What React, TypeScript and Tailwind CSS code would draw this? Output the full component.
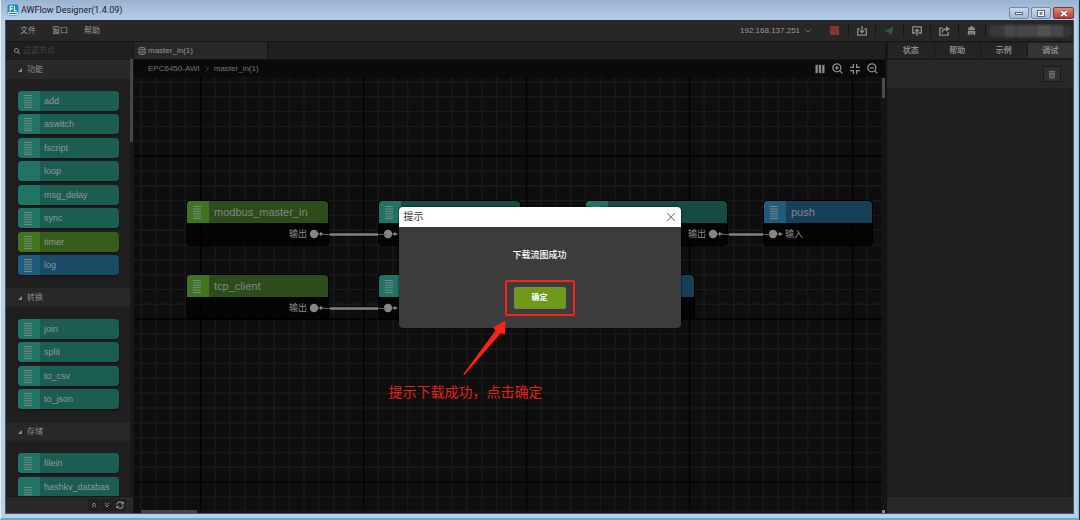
import type { ReactNode } from "react";
import { ChevronDown, ChevronRight, ChevronsDown, ChevronsUp, X } from "lucide-react";
import { FaSearch, FaSyncAlt } from "react-icons/fa";

type Tone = "teal" | "green" | "blue";

interface PaletteItem {
  name: string;
  tone: Tone;
  icon?: boolean;
}

interface FlowNode {
  id: string;
  label: string;
  tone: Tone;
  input?: string;
  output?: string;
  // place on the canvas, in canvas pixels
  place: string;
}

const tones: Record<Tone, { head: string; body: string; nodeBody: string }> = {
  teal: { head: "bg-[#1f7465]", body: "bg-[#1c5d52]", nodeBody: "bg-[#174b42]" },
  green: { head: "bg-[#41741f]", body: "bg-[#355c1b]", nodeBody: "bg-[#2c4d19]" },
  blue: { head: "bg-[#1f5b7e]", body: "bg-[#1c4b67]", nodeBody: "bg-[#173f58]" },
};

const functionItems: PaletteItem[] = [
  { name: "add", tone: "teal", icon: true },
  { name: "aswitch", tone: "teal", icon: true },
  { name: "fscript", tone: "teal", icon: true },
  { name: "loop", tone: "teal" },
  { name: "msg_delay", tone: "teal" },
  { name: "sync", tone: "teal", icon: true },
  { name: "timer", tone: "green", icon: true },
  { name: "log", tone: "blue", icon: true },
];

const convertItems: PaletteItem[] = [
  { name: "join", tone: "teal", icon: true },
  { name: "split", tone: "teal", icon: true },
  { name: "to_csv", tone: "teal", icon: true },
  { name: "to_json", tone: "teal", icon: true },
];

const nodes: FlowNode[] = [
  { id: "n1", label: "modbus_master_in", tone: "green", output: "输出", place: "left-[52px] top-[123px] w-[143px]" },
  { id: "n2", label: "", tone: "teal", input: "", place: "left-[244px] top-[123px] w-[143px]" },
  { id: "n3", label: "", tone: "teal", output: "输出", place: "left-[451px] top-[123px] w-[143px]" },
  { id: "n4", label: "push", tone: "blue", input: "输入", place: "left-[629px] top-[123px] w-[110px]" },
  { id: "n5", label: "tcp_client", tone: "green", output: "输出", place: "left-[52px] top-[197px] w-[143px]" },
  { id: "n6", label: "", tone: "teal", input: "", place: "left-[244px] top-[197px] w-[143px]" },
  { id: "n7", label: "", tone: "blue", place: "left-[418px] top-[197px] w-[143px]" },
];

const wires = [
  { from: 195, to: 244, y: 157 },
  { from: 195, to: 244, y: 231 },
  { from: 594, to: 629, y: 157 },
];

const MAJOR = 163;
const range = (n: number) => Array.from({ length: n }, (_, i) => i);

const ListGlyph = () => (
  <svg width="8" height="13" viewBox="0 0 8 13" className="text-[#768984]" aria-hidden="true">
    {[0, 2.4, 4.8, 7.2, 9.6, 12].map((y) => (
      <rect key={y} x="0" y={y} width="8" height="1" fill="currentColor" />
    ))}
  </svg>
);

const PaletteNode = ({ name, tone, icon }: PaletteItem) => (
  <div
    draggable
    className={`flex h-5 overflow-hidden rounded-sm shadow-[0_1px_2px_#111] ${tones[tone].body}`}
  >
    <span className={`flex w-[22px] items-center pl-1.5 pt-px ${tones[tone].head}`}>{icon && <ListGlyph />}</span>
    <span className="pl-1 text-[9px] leading-5 text-[#8c9a96]">{name}</span>
  </div>
);

const SectionHeader = ({ title }: { title: string }) => (
  <button className="flex h-5 w-full items-center border-t border-[#1a1a1a] bg-[#282828] pl-3 text-[8px] text-[#8c8c8c]">
    <svg width="4" height="4" viewBox="0 0 4 4" className="mr-[5px]" aria-hidden="true">
      <path d="M4 0V4H0Z" fill="#8c8c8c" />
    </svg>
    {title}
  </button>
);

const Port = () => (
  <svg width="16" height="10" viewBox="0 0 16 10" aria-hidden="true">
    <circle cx="5" cy="5" r="4.2" fill="#868686" />
    <path d="M9 4.5H11V3L15 5L11 7V5.5H9Z" fill="#868686" />
  </svg>
);

const CanvasNode = ({ node }: { node: FlowNode }) => (
  <div className={`absolute rounded-sm border border-black bg-black/70 ${node.place}`}>
    <div className={`flex h-[22px] overflow-hidden rounded-t-sm ${tones[node.tone].nodeBody}`}>
      <span className={`flex w-[22px] items-center pl-1.5 ${tones[node.tone].head}`}>
        <ListGlyph />
      </span>
      <span className="pl-[5px] text-[11px] leading-[22px] text-[#848484]">{node.label}</span>
    </div>
    <div className="flex h-[22px] items-center text-[9px] text-[#8c8c8c]">
      {node.input !== undefined && (
        <span className="flex items-center gap-px pl-1">
          <Port />
          {node.input}
        </span>
      )}
      {node.output !== undefined && (
        <span className="ml-auto flex items-center gap-0.5 pr-[3px]">
          {node.output}
          <Port />
        </span>
      )}
    </div>
  </div>
);

const Grid = () => (
  <svg className="absolute inset-0 h-full w-full" aria-hidden="true">
    {range(160).map((i) => (
      <g key={i} stroke="#1a1a1a" strokeWidth="1.4">
        <line x1={7 + (i * MAJOR) / 11} x2={7 + (i * MAJOR) / 11} y1="0" y2="100%" />
        <line y1={5 + (i * MAJOR) / 11} y2={5 + (i * MAJOR) / 11} x1="0" x2="100%" />
      </g>
    ))}
    {range(15).map((i) => (
      <g key={i} stroke="#000" strokeWidth="1.4">
        <line x1={66.5 + i * MAJOR} x2={66.5 + i * MAJOR} y1="0" y2="100%" />
        <line y1={79 + i * MAJOR} y2={79 + i * MAJOR} x1="0" x2="100%" />
      </g>
    ))}
  </svg>
);

const Wires = () => (
  <svg className="pointer-events-none absolute inset-0 h-full w-full" aria-hidden="true">
    {wires.map((w) => (
      <g key={`${w.from}-${w.y}`}>
        <line x1={w.from - 8} x2={w.to + 8} y1={w.y + 0.5} y2={w.y + 0.5} stroke="#5c5a5a" />
        <line x1={w.from + 1} x2={w.to} y1={w.y + 0.5} y2={w.y + 0.5} stroke="#858181" strokeWidth="2.4" />
      </g>
    ))}
  </svg>
);

const ToolButton = ({ label, children }: { label: string; children: ReactNode }) => (
  <button aria-label={label} className="flex h-[14px] flex-1 items-center justify-center border-r border-[#161616]">
    {children}
  </button>
);

const stroke = { fill: "none", stroke: "#8e8e8e", strokeWidth: 1.3 };

const TitleBar = () => (
  <header className="flex h-5 items-center bg-linear-to-b from-[#9ab3d0] to-[#b7cfea] pl-1.5 pr-1">
    <svg width="12" height="12" viewBox="0 0 12 12" aria-hidden="true">
      <rect x="0.5" y="0.5" width="11" height="11" rx="2" fill="#168fc4" />
      <rect x="1" y="8" width="10" height="3" rx="1" fill="#dfeaf2" />
      <path d="M3.2 7.2V2.2H6M3.2 4.6H5.6M7.4 2V6.7H9.8" fill="none" stroke="#fff" strokeWidth="1.1" />
      <path d="M2 9.5H10" stroke="#2b4a5c" strokeWidth="0.8" />
    </svg>
    <h1 className="ml-0.5 font-['Roboto','Noto_Sans_CJK_SC',sans-serif] text-[9px] text-[#1c222b]">
      AWFlow Designer(1.4.09)
    </h1>
    <div className="ml-auto flex gap-0.5 pt-1.5">
      <button aria-label="最小化" className="flex h-3 w-5 items-center justify-center rounded-xs border border-[#7389a6] bg-linear-to-b from-[#c8d9ec] to-[#a2bbd8]">
        <span className="h-[3px] w-2 border border-[#5e6874] bg-white" />
      </button>
      <button aria-label="最大化" className="flex h-3 w-5 items-center justify-center rounded-xs border border-[#7389a6] bg-linear-to-b from-[#c8d9ec] to-[#a2bbd8]">
        <svg width="8" height="7" viewBox="0 0 8 7" aria-hidden="true">
          <rect x="0.5" y="0.5" width="7" height="6" fill="#fff" stroke="#5e6874" />
          <rect x="3" y="2.5" width="2" height="2" fill="#8fa6c0" stroke="#5e6874" strokeWidth="0.7" />
        </svg>
      </button>
      <button aria-label="关闭" className="flex h-3 w-[21px] items-center justify-center rounded-xs border border-[#7a3c3a] bg-linear-to-b from-[#d98a7c] to-[#bb3a26]">
        <svg width="8" height="7" viewBox="0 0 8 7" aria-hidden="true">
          <path d="M1 1L7 6M7 1L1 6" stroke="#5a3030" strokeWidth="2.8" />
          <path d="M1 1L7 6M7 1L1 6" stroke="#fff" strokeWidth="1.7" />
        </svg>
      </button>
    </div>
  </header>
);

const MenuBar = () => (
  <nav className="flex h-[21px] shrink-0 items-center bg-[#272727] text-[8px] text-[#9a9a9a]">
    <div className="flex gap-4 pl-3.5">
      <button>文件</button>
      <button>窗口</button>
      <button>帮助</button>
    </div>
    <div className="ml-auto flex items-center">
      <label className="relative flex items-center">
        <select aria-label="设备地址" className="w-[81px] appearance-none bg-transparent text-[8px] outline-none">
          <option>192.168.137.251</option>
        </select>
        <ChevronDown className="pointer-events-none absolute left-16 size-2" />
      </label>
      <div className="flex w-[165px]">
        <ToolButton label="停止">
          <span className="size-[9px] bg-[#853233]" />
        </ToolButton>
        <ToolButton label="下载">
          <svg width="10" height="10" viewBox="0 0 10 10" aria-hidden="true">
            <path d="M2.5 3H0.7V9.2H9.3V3H7.5M5 0V6.5M3 4.6L5 6.6L7 4.6" {...stroke} />
          </svg>
        </ToolButton>
        <ToolButton label="运行">
          <svg width="10" height="10" viewBox="0 0 10 10" aria-hidden="true">
            <path d="M0.5 5L9.5 0.5L7.2 9.5L4.6 6.2Z" fill="#27633a" />
          </svg>
        </ToolButton>
        <ToolButton label="上传">
          <svg width="10" height="10" viewBox="0 0 10 10" aria-hidden="true">
            <path d="M3.5 7H0.7V0.8H9.3V7H6.5M5 10V3.4M3 5.3L5 3.3L7 5.3" {...stroke} />
          </svg>
        </ToolButton>
        <ToolButton label="导出">
          <svg width="11" height="10" viewBox="0 0 11 10" aria-hidden="true">
            <path d="M4 2.2H0.8V9.2H9.2V6M3 6.6C3.4 4.4 5 3 8 3" {...stroke} />
            <path d="M7 0L11 3L7 5.8Z" fill="#8e8e8e" />
          </svg>
        </ToolButton>
        <ToolButton label="清理">
          <svg width="9" height="9" viewBox="0 0 9 9" aria-hidden="true">
            <path d="M3 0.3H6V1.6H7.8V4H1.2V1.6H3ZM0.8 4.8H8.2V8.8H0.8Z" fill="#8e8e8e" />
            <path d="M3.3 6.6V9M5.7 6.6V9" stroke="#272727" strokeWidth="0.8" />
          </svg>
        </ToolButton>
      </div>
      {/* account name, smudged out */}
      <div className="flex h-[19px] w-[87px] items-center overflow-hidden pl-0.5">
        <span className="h-3 w-4 rounded-l-full bg-[#353a3c] blur-[1px]" />
        <span className="h-3 w-3 bg-[#45494b] blur-[1px]" />
        <span className="h-3 w-5 bg-[#4a4648] blur-[1px]" />
        <span className="h-3 w-4 bg-[#505153] blur-[1px]" />
        <span className="h-3 w-3 bg-[#45494c] blur-[1px]" />
        <span className="h-3 w-2 rounded-r-full bg-[#33383b] blur-[1px]" />
      </div>
    </div>
  </nav>
);

const Palette = () => (
  <aside className="flex w-[127px] shrink-0 flex-col bg-[#1f1f1f]">
    <label className="flex h-[17px] shrink-0 items-center gap-[3px] pl-2 text-[#8a8a8a]">
      <FaSearch className="size-[6px]" />
      <input
        aria-label="过滤节点"
        placeholder="过滤节点"
        className="w-24 bg-transparent text-[8px] outline-none placeholder:text-[#444]"
      />
    </label>
    <div className="flex min-h-0 flex-1">
      <div className="min-w-0 flex-1 overflow-hidden">
        <SectionHeader title="功能" />
        <div className="flex h-[208px] flex-col justify-between py-3 pl-3 pr-[11px]">
          {functionItems.map((item) => (
            <PaletteNode key={item.name} {...item} />
          ))}
        </div>
        <SectionHeader title="转换" />
        <div className="flex h-[114px] flex-col justify-between py-3 pl-3 pr-[11px]">
          {convertItems.map((item) => (
            <PaletteNode key={item.name} {...item} />
          ))}
        </div>
        <SectionHeader title="存储" />
        <div className="flex flex-col gap-1 py-3 pl-3 pr-[11px]">
          <PaletteNode name="filein" tone="teal" icon />
          <div className="flex h-8 overflow-hidden rounded-sm bg-[#1c5d52]">
            <span className="flex w-[22px] items-center bg-[#1f7465] pl-1.5 pt-px">
              <ListGlyph />
            </span>
            <span className="pl-1 text-[9px] leading-5 text-[#8c9a96]">hashkv_databas</span>
          </div>
        </div>
      </div>
      <div className="w-[3px] bg-[#191919]">
        <div className="h-[83px] bg-[#474747]" />
      </div>
    </div>
    <div className="flex h-[17px] shrink-0 items-center justify-end gap-px border-t border-[#171717] bg-[#282828] pr-[7px] text-[#8a8a8a]">
      <button aria-label="全部折叠" className="flex h-3 w-3 items-center justify-center bg-[#202020]">
        <ChevronsUp className="size-2" strokeWidth={3} />
      </button>
      <button aria-label="全部展开" className="flex h-3 w-3 items-center justify-center bg-[#202020]">
        <ChevronsDown className="size-2" strokeWidth={3} />
      </button>
      <button aria-label="刷新" className="flex h-3 w-3 items-center justify-center bg-[#202020]">
        <FaSyncAlt className="size-2" />
      </button>
    </div>
  </aside>
);

const Workspace = () => (
  <main className="flex min-w-0 flex-1 flex-col bg-[#141414]">
    <div className="flex h-[18px] shrink-0 border-b border-[#141414] bg-[#1f1f1f]">
      <button className="flex w-[134px] items-center gap-0.5 border-r border-[#131313] bg-[#282828] pl-1 text-[8px] text-[#979797]">
        <svg width="8" height="8" viewBox="0 0 8 8" aria-hidden="true">
          <path d="M1.6 0.7H6.4M0 2.9H8M0 5.1H8M1.6 7.3H6.4" stroke="#8e8e8e" strokeWidth="1" />
          <path d="M1.6 0.7L0.4 2.9M6.4 0.7L7.6 2.9M0.4 5.1L1.6 7.3M7.6 5.1L6.4 7.3" stroke="#8e8e8e" strokeWidth="0.8" />
        </svg>
        master_in(1)
      </button>
    </div>
    <div className="flex h-[17px] shrink-0 items-center bg-[#0a0a0a] pl-3.5 pr-[7px] text-[8px] text-[#757575]">
      <a href="#root-flow">EPC6450-AWI</a>
      <ChevronRight className="mx-0.5 size-2.5 text-[#4a4a4a]" strokeWidth={2} />
      <span>master_in(1)</span>
      <div className="ml-auto flex gap-[7px]">
        <button aria-label="导航图">
          <svg width="10" height="10" viewBox="0 0 10 10" aria-hidden="true">
            <path d="M0.5 1.2L2.8 0.4V8.8L0.5 9.6ZM3.8 0.4L6.2 1.2V9.6L3.8 8.8ZM7.2 1.2L9.5 0.4V8.8L7.2 9.6Z" fill="#8a8a8a" />
          </svg>
        </button>
        <button aria-label="放大">
          <svg width="11" height="11" viewBox="0 0 11 11" aria-hidden="true">
            <circle cx="4.8" cy="4.8" r="4" {...stroke} />
            <path d="M7.8 7.8L10.4 10.4M4.8 2.8V6.8M2.8 4.8H6.8" {...stroke} />
          </svg>
        </button>
        <button aria-label="适应窗口">
          <svg width="10" height="10" viewBox="0 0 10 10" aria-hidden="true">
            <path d="M0 3.4H3.4V0M6.6 0V3.4H10M10 6.6H6.6V10M3.4 10V6.6H0" {...stroke} />
          </svg>
        </button>
        <button aria-label="缩小">
          <svg width="11" height="11" viewBox="0 0 11 11" aria-hidden="true">
            <circle cx="4.8" cy="4.8" r="4" {...stroke} />
            <path d="M7.8 7.8L10.4 10.4M2.8 4.8H6.8" {...stroke} />
          </svg>
        </button>
      </div>
    </div>
    <div className="flex min-h-0 flex-1">
      <div className="relative min-w-0 flex-1 overflow-hidden bg-[#0e0e0e]">
        <Grid />
        {nodes.map((node) => (
          <CanvasNode key={node.id} node={node} />
        ))}
        <Wires />
      </div>
      <div className="w-[3px] pt-px">
        <div className="h-5 bg-[#4a4a4a]" />
      </div>
    </div>
    <div className="flex h-[3px] shrink-0 justify-between pl-[7px]">
      <div className="w-14 bg-[#454545]" />
      <div className="w-[3px] bg-[#8a8a8a]" />
    </div>
  </main>
);

const tabs = ["状态", "帮助", "示例", "调试"];

const SidePanel = () => (
  <aside className="flex w-[187px] shrink-0 flex-col border-l border-[#111] bg-[#1f1f1f]">
    <div className="flex h-[18px] shrink-0 border-b border-[#161616] py-px">
      {tabs.map((tab) => (
        <button
          key={tab}
          className={`flex-1 border-l border-[#171717] text-[8px] font-bold text-[#8a8a8a] ${
            tab === "调试" ? "bg-[#343434]" : "bg-[#242424]"
          }`}
        >
          {tab}
        </button>
      ))}
    </div>
    <div className="flex h-7 shrink-0 items-center justify-end bg-[#282828] pr-3">
      <button aria-label="清空" className="flex h-4 w-[18px] items-center justify-center border border-[#191919] bg-[#303030]">
        <svg width="8" height="9" viewBox="0 0 8 9" aria-hidden="true">
          <path d="M0.5 1.2H2.6L3 0.4H5L5.4 1.2H7.5V2.2H0.5ZM1 2.8H7L6.6 8.6H1.4Z" fill="#6c6c6c" />
          <path d="M3 4V7.6M4.9 4V7.6" stroke="#303030" strokeWidth="0.6" />
        </svg>
      </button>
    </div>
    <div className="mr-0.5 flex-1 border-r border-[#191919]" />
    <div className="h-[17px] shrink-0 border-t border-[#191919] bg-[#282828]" />
  </aside>
);

const Dialog = () => (
  <div
    role="dialog"
    aria-labelledby="dialog-title"
    className="relative h-[121px] w-[282px] rounded-sm bg-[#3c3c3c] text-white shadow-[0_0_2px_#000]"
  >
    <div className="flex h-5 items-center justify-between rounded-t-sm bg-white pl-[5px] pr-[3px] text-[#333]">
      <h2 id="dialog-title" className="text-[10px]">提示</h2>
      <button aria-label="关闭" className="text-[#777]">
        <X className="size-3.5" strokeWidth={1.8} />
      </button>
    </div>
    <div className="flex flex-col items-center pt-5">
      <p className="text-[9px] font-medium leading-4">下载流图成功</p>
      <div className="mt-[17px] rounded-xs border-2 border-[#fb2314] p-[5px] px-[7px]">
        <button className="block h-[22px] w-[52px] rounded-xs border border-[#7a8a4c] bg-[#6e9919] text-[8px] font-bold">
          确定
        </button>
      </div>
    </div>
    <svg width="46" height="58" viewBox="0 0 46 58" className="absolute left-[63px] top-[112px]" aria-hidden="true">
      <path d="M1.2 55.2L33.5 11.5L31.2 8.6L43.5 1.5L43 15.5L38.8 14.2L2.4 56Z" fill="#fb2314" />
    </svg>
    <p className="absolute left-[-10px] top-[175px] whitespace-nowrap text-[14px] leading-5 text-[#e32014]">
      提示下载成功，点击确定
    </p>
  </div>
);

export default function App() {
  return (
    <div className="flex h-screen flex-col bg-[#12343f] pr-px font-['Liberation_Sans','Noto_Sans_CJK_SC',sans-serif] leading-none">
      <div className="flex min-h-0 flex-1 flex-col border-b-2 border-l border-r border-b-[#4fb6d6] border-l-[#e6eef8] border-r-[#6fc3dc] bg-[#bbcfe9]">
        <TitleBar />
        <div className="relative mx-1 mb-1 flex min-h-0 flex-1 flex-col border border-t-0 border-[#4a5566] bg-[#161616]">
          <MenuBar />
          <div className="flex min-h-0 flex-1 gap-px pt-px">
            <Palette />
            <Workspace />
            <SidePanel />
          </div>
          <div className="absolute inset-0 flex items-center justify-center pt-0.5">
            <Dialog />
          </div>
        </div>
      </div>
    </div>
  );
}
